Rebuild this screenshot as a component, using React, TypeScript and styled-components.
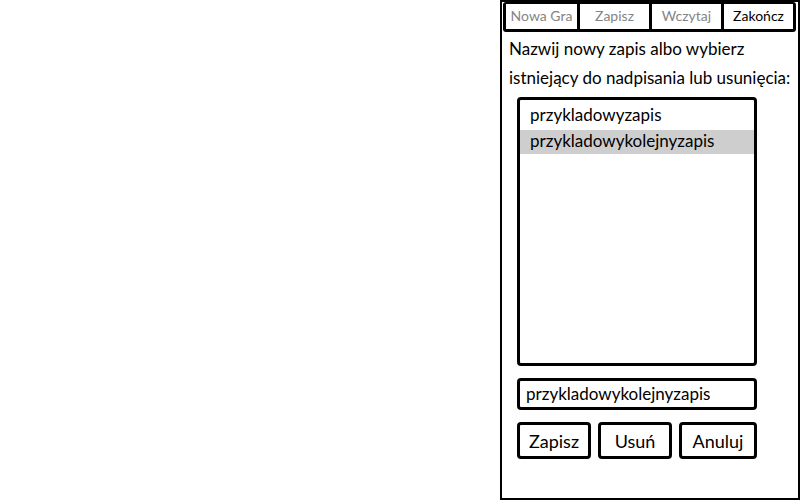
import React, { useState } from "react";
import styled, { createGlobalStyle } from "styled-components";

const GlobalStyle = createGlobalStyle`
  *, *::before, *::after { box-sizing: border-box; }
  body { margin: 0; background: #fff; color: #000; }
  body, button, input { font-family: Gabriola, Lato, sans-serif; }
`;

const Screen = styled.div`
  display: grid;
  grid-template-columns: 5fr 3fr;
  min-height: 100vh;
`;

const Board = styled.main`
  background: #fff;
`;

const Sidebar = styled.aside`
  display: flex;
  flex-direction: column;
  min-width: 0;
  border: 2px solid #000;
`;

const Menu = styled.nav`
  display: grid;
  grid-template-columns: 71fr 69fr 69fr 69fr;
  gap: 3px;
  margin: 0 2px 0 1px;
  border: 3px solid #000;
  border-top-width: 2px;
  border-radius: 3px;
  background: #000;
`;

const MenuButton = styled.button`
  height: 25px;
  padding: 0 0 1px;
  border: 0;
  background: #fff;
  color: #000;
  font-size: 14px;
  line-height: 24px;
  white-space: nowrap;

  &:disabled { color: #858585; }
`;

const Form = styled.form`
  display: flex;
  flex: 1;
  flex-direction: column;
  padding: 2px 0 39px;
`;

const Prompt = styled.label`
  padding-left: 7px;
  font-size: 17px;
  line-height: 29px;
  white-space: nowrap;
`;

const Fields = styled.div`
  display: flex;
  flex: 1;
  flex-direction: column;
  gap: 12px;
  margin: 5px 41px 0 15px;
`;

const SaveList = styled.ul`
  display: flex;
  flex: 1;
  flex-direction: column;
  gap: 2px;
  margin: 0;
  padding: 4px 0;
  border: 3px solid #000;
  border-radius: 4px;
  list-style: none;
`;

const SaveItem = styled.button<{ $selected: boolean }>`
  display: block;
  width: 100%;
  height: 24px;
  padding: 0 10px 2px;
  border: 0;
  background: ${({ $selected }) => ($selected ? "#cecece" : "transparent")};
  color: #000;
  font-size: 17px;
  line-height: 22px;
  text-align: left;
`;

const NameInput = styled.input`
  width: 100%;
  height: 32px;
  padding: 0 6px 2px;
  border: 3px solid #000;
  border-radius: 4px;
  background: #fff;
  color: #000;
  font-size: 17px;
  outline: none;
`;

const Actions = styled.div`
  display: grid;
  grid-template-columns: 74fr 74fr 78fr;
  gap: 7px;
`;

const ActionButton = styled.button`
  height: 37px;
  padding: 0;
  border: 3px solid #000;
  border-radius: 4px;
  background: #fff;
  color: #000;
  font-size: 18px;
  line-height: 24px;
`;

const menu = [
  { label: "Nowa Gra", disabled: true },
  { label: "Zapisz", disabled: true },
  { label: "Wczytaj", disabled: true },
  { label: "Zakończ", disabled: false },
];

const saves = ["przykladowyzapis", "przykladowykolejnyzapis"];

export default function App() {
  const [name, setName] = useState(saves[1]);

  return (
    <>
      <GlobalStyle />
      <Screen>
        <Board />
        <Sidebar>
          <Menu>
            {menu.map(({ label, disabled }) => (
              <MenuButton key={label} type="button" disabled={disabled}>
                {label}
              </MenuButton>
            ))}
          </Menu>
          <Form onSubmit={(event) => event.preventDefault()}>
            <Prompt htmlFor="save-name">
              Nazwij nowy zapis albo wybierz
              <br />
              istniejący do nadpisania lub usunięcia:
            </Prompt>
            <Fields>
              <SaveList>
                {saves.map((save) => (
                  <li key={save}>
                    <SaveItem
                      type="button"
                      $selected={save === name}
                      aria-pressed={save === name}
                      onClick={() => setName(save)}
                    >
                      {save}
                    </SaveItem>
                  </li>
                ))}
              </SaveList>
              <NameInput
                id="save-name"
                value={name}
                onChange={(event) => setName(event.target.value)}
              />
              <Actions>
                <ActionButton type="submit">Zapisz</ActionButton>
                <ActionButton type="button">Usuń</ActionButton>
                <ActionButton type="button">Anuluj</ActionButton>
              </Actions>
            </Fields>
          </Form>
        </Sidebar>
      </Screen>
    </>
  );
}
